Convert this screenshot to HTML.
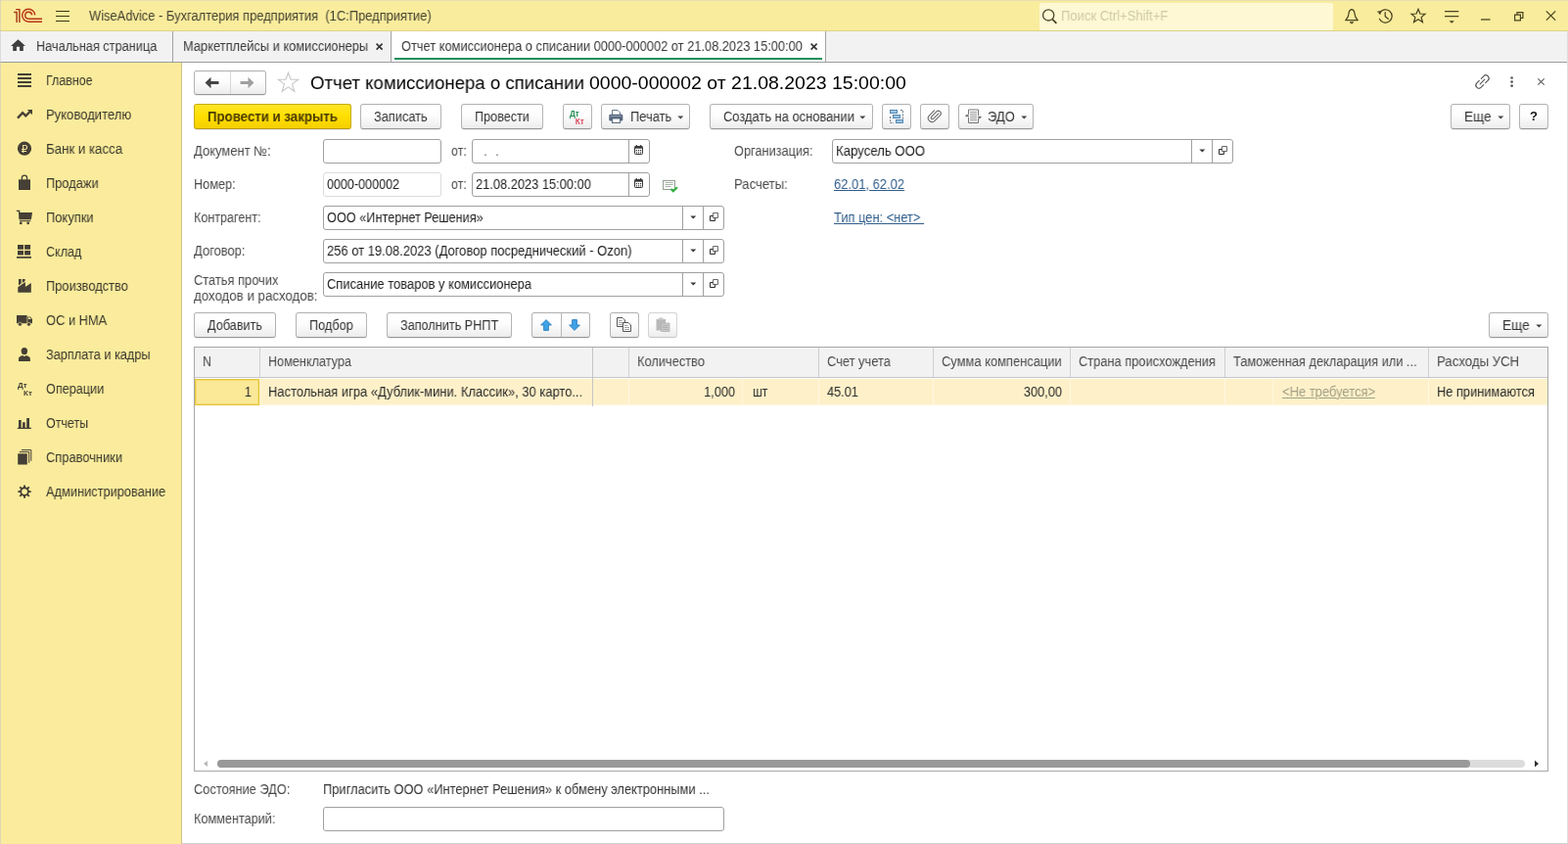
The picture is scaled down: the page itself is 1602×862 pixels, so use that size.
<!DOCTYPE html>
<html lang="ru">
<head>
<meta charset="utf-8">
<title>WiseAdvice - Бухгалтерия предприятия (1С:Предприятие)</title>
<style>
*{box-sizing:border-box;margin:0;padding:0}
html,body{width:1602px;height:862px;overflow:hidden;background:#fff}
body{position:relative;font-family:"Liberation Sans",Arial,sans-serif;font-size:13px;color:#333;line-height:16px;letter-spacing:0}
.abs{position:absolute}
svg{position:absolute;overflow:visible;will-change:transform}
.t{position:absolute;will-change:transform;transform-origin:0 50%;font-size:14px;white-space:nowrap;height:16px;line-height:16px;color:#3a3a3a}
#titlebar{left:0;top:0;width:1602px;height:32px;background:#f9ec9d;border-bottom:1px solid #e0d488;border-top:1px solid #e8deb2}
#tabs{left:0;top:32px;width:1602px;height:32px;background:#f2f2f2;border-bottom:1px solid #9c9c9c}
#side{left:0;top:64px;width:186px;height:798px;background:#faec9c;border-right:1px solid #cfc283}
#search{left:1062px;top:3px;width:300px;height:28px;background:#fef8d4;border-radius:2px}
.tabsep{position:absolute;top:32px;width:1px;height:31px;background:#a2a2a2}
#acttab{left:400px;top:32px;width:443px;height:31px;background:#fff}
#actline{left:403px;top:59px;width:437px;height:2px;background:#1c8f5c}
.btn{position:absolute;height:26px;border:1px solid #b4b4b4;border-top-color:#b0b0b0;border-bottom-color:#989898;border-radius:3px;background:linear-gradient(#fff 0%,#fdfdfd 45%,#ececec 100%);box-shadow:0 1px 0 rgba(0,0,0,.07);font-size:13px;line-height:24px;color:#333;white-space:nowrap}
.btn.y{background:linear-gradient(#ffe526 0%,#ffdf00 50%,#f5cf00 100%);border-color:#c9a900;border-bottom-color:#b89a00}
.btn.dis{border-color:#d4d4d4;border-bottom-color:#c6c6c6;box-shadow:none}
.bt{position:absolute;will-change:transform;transform-origin:0 50%;font-size:14px;white-space:nowrap;line-height:16px;height:16px;color:#333}
.inp{position:absolute;height:25px;border:1px solid #a0a0a0;border-radius:3px;background:#fff}
.inp.ro{border-color:#dcdcdc}
.vd{position:absolute;width:1px;height:23px;background:#a0a0a0}
.it{position:absolute;will-change:transform;transform-origin:0 50%;font-size:14px;white-space:nowrap;line-height:16px;height:16px;color:#1e1e1e}
.lbl{position:absolute;will-change:transform;transform-origin:0 50%;font-size:14px;white-space:nowrap;line-height:16px;height:16px;color:#4a4a4a}
.side-t{position:absolute;will-change:transform;transform-origin:0 50%;font-size:14px;left:47px;white-space:nowrap;line-height:16px;height:16px;color:#3a372c}
.lnk{position:absolute;will-change:transform;transform-origin:0 50%;font-size:14px;white-space:nowrap;line-height:16px;height:16px;color:#2f5d8c;text-decoration:underline}
.th{color:#4a4a4a}
.td{color:#2a2a2a}
</style>
</head>
<body>
<div id="titlebar" class="abs"></div>
<svg style="left:14px;top:9px" width="30" height="15" viewBox="0 0 30 15" fill="none" stroke="#b83616" stroke-width="1.450">
<path d="M0.100 3.500 H3.100 V14 M2.100 0.600 H5.900 V14" stroke="#a8381a"/>
<path d="M21.700 6.400 A6.500 6.500 0 1 0 15.200 13.200 H29"/>
<path d="M18.700 6.400 A3.500 3.500 0 1 0 15.200 10.200 H29"/>
</svg>
<svg style="left:57px;top:11px" width="14" height="11" viewBox="0 0 14 11" shape-rendering="crispEdges"><path d="M0 0h14v1H0zM0 5h14v1H0zM0 10h14v1H0z" fill="#3b3410"/></svg>
<div class="t" id="apptitle" style="transform:translateY(-1px) scaleX(0.9222);left:91px;top:9px;color:#454230">WiseAdvice - Бухгалтерия предприятия&nbsp; (1С:Предприятие)</div>
<div id="search" class="abs"></div>
<svg style="left:1064px;top:8px" width="17" height="17" viewBox="0 0 17 17" fill="none" stroke="#4a4426" stroke-width="1.3"><circle cx="7.2" cy="7.4" r="5.600"/><path d="M11.2 11.6 L15.400 15.800" stroke-width="1.8"/></svg>
<div class="t" id="srch" style="transform:translateY(-1px) scaleX(0.9312);left:1084px;top:9px;color:#cfcaa6">Поиск Ctrl+Shift+F</div>
<svg style="left:1374px;top:8px" width="15" height="17" viewBox="0 0 15 17" fill="none" stroke="#4a4320" stroke-width="1.250" stroke-linejoin="round"><path d="M7 1.600 C4.600 2 4.100 4 4 6 C3.800 9.500 2.500 10.800 0.700 12.700 H13.300 C11.500 10.800 10.200 9.500 10 6 C9.900 4 9.400 2 7 1.600 Z"/><path d="M5 14.600 H9 L7 16.200 Z" fill="#4a4320" stroke-width="0.600"/></svg>
<svg style="left:1407px;top:8px" width="17" height="17" viewBox="0 0 17 17" fill="none" stroke="#4a4320" stroke-width="1.250" stroke-linecap="round"><path d="M2.600 5.300 A6.700 6.700 0 1 1 2.400 11.300"/><path d="M0.600 3.800 L4.300 3.300 L3.100 6.600 Z" fill="#4a4320" stroke-width="0.500" stroke-linejoin="round"/><path d="M8.200 4.600 V8.600 L11.300 11.300"/></svg>
<svg style="left:1441px;top:8px" width="16" height="16" viewBox="0 0 16 16" fill="none" stroke="#4a4320" stroke-width="1.25" stroke-linejoin="miter"><path d="M8 1.3 L9.9 6 L15 6.300 L11.100 9.600 L12.400 14.600 L8 11.800 L3.6 14.600 L4.9 9.600 L1 6.300 L6.100 6 Z"/></svg>
<svg style="left:1476px;top:10px" width="15" height="14" viewBox="0 0 15 14"><path d="M0 1h14.300v1.200H0zM0 6h14.300v1.200H0z" fill="#4a4320"/><path d="M4.500 11.200 H9.900 L7.200 13.700 Z" fill="#4a4320"/></svg>
<svg style="left:1513px;top:19px" width="10" height="2" viewBox="0 0 10 2"><path d="M0 0.300h9.500v1.300H0z" fill="#4a4320"/></svg>
<svg style="left:1547px;top:12px" width="10" height="10" viewBox="0 0 10 10" fill="none" stroke="#4a4320" stroke-width="1.2"><path d="M0.600 3.100 H6.400 V8.900 H0.600 Z"/><path d="M3 3 V0.700 H8.900 V6.400 H6.500"/></svg>
<svg style="left:1579px;top:11px" width="11" height="10" viewBox="0 0 11 10" fill="none" stroke="#4a4320" stroke-width="1.25"><path d="M0.800 0.400 L10.2 9.600 M10.2 0.400 L0.800 9.600"/></svg>
<div id="tabs" class="abs"></div>
<div id="acttab" class="abs"></div>
<div id="actline" class="abs"></div>
<div class="tabsep" style="left:176px"></div>
<div class="tabsep" style="left:399px"></div>
<div class="tabsep" style="left:843px"></div>
<svg style="left:11px;top:40px" width="15" height="13" viewBox="0 0 15 13"><path d="M7.500 0.200 L15 6.900 H12.800 V12 H9.100 V7.800 H5.900 V12 H2.200 V6.900 H0 Z" fill="#3f3f3f"/></svg>
<div class="t" id="tab1" style="transform:translateY(-1px) scaleX(0.9102);left:37px;top:40px">Начальная страница</div>
<div class="t" id="tab2" style="transform:translateY(-1px) scaleX(0.9188);left:187px;top:40px">Маркетплейсы и комиссионеры</div>
<div class="t" id="tab3" style="transform:translateY(-1px) scaleX(0.9168);left:410px;top:40px">Отчет комиссионера о списании 0000-000002 от 21.08.2023 15:00:00</div>
<svg style="left:384px;top:44px" width="7" height="7" viewBox="0 0 7 7" fill="none" stroke="#333" stroke-width="1.600"><path d="M0.600 0.600 L6.600 6.600 M6.600 0.600 L0.600 6.600"/></svg>
<svg style="left:828px;top:44px" width="7" height="7" viewBox="0 0 7 7" fill="none" stroke="#333" stroke-width="1.600"><path d="M0.600 0.600 L6.600 6.600 M6.600 0.600 L0.600 6.600"/></svg>
<div id="side" class="abs"></div>
<div class="side-t" id="s0" style="transform:translateY(-1px) scaleX(0.8879);top:75px">Главное</div>
<div class="side-t" id="s1" style="transform:translateY(-1px) scaleX(0.9325);top:110px">Руководителю</div>
<div class="side-t" id="s2" style="transform:translateY(-1px) scaleX(0.9462);top:145px">Банк и касса</div>
<div class="side-t" id="s3" style="transform:translateY(-1px) scaleX(0.9167);top:180px">Продажи</div>
<div class="side-t" id="s4" style="transform:translateY(-1px) scaleX(0.9227);top:215px">Покупки</div>
<div class="side-t" id="s5" style="transform:translateY(-1px) scaleX(0.8956);top:250px">Склад</div>
<div class="side-t" id="s6" style="transform:translateY(-1px) scaleX(0.9180);top:285px">Производство</div>
<div class="side-t" id="s7" style="transform:translateY(-1px) scaleX(0.9200);top:320px">ОС и НМА</div>
<div class="side-t" id="s8" style="transform:translateY(-1px) scaleX(0.9100);top:355px">Зарплата и кадры</div>
<div class="side-t" id="s9" style="transform:translateY(-1px) scaleX(0.9038);top:390px">Операции</div>
<div class="side-t" id="s10" style="transform:translateY(-1px) scaleX(0.8924);top:425px">Отчеты</div>
<div class="side-t" id="s11" style="transform:translateY(-1px) scaleX(0.9207);top:460px">Справочники</div>
<div class="side-t" id="s12" style="transform:translateY(-1px) scaleX(0.9146);top:495px">Администрирование</div>
<svg style="left:0;top:64px" width="48" height="460" viewBox="0 64 48 460">
<path d="M18 75h14v2H18zM18 79h14v2H18zM18 83h14v2H18zM18 87h14v2H18z" fill="#453f36" shape-rendering="crispEdges"/>
<path d="M18 120.600 L23.100 115.200 L26.300 118.400 L30.400 114.300" fill="none" stroke="#453f36" stroke-width="2.300"/><path d="M27.800 112 H33 V117.200 Z" fill="#453f36"/>
<circle cx="25" cy="151.700" r="7.100" fill="#453f36"/>
<text x="25.100" y="155.900" text-anchor="middle" font-family="DejaVu Sans, Liberation Sans, sans-serif" font-size="10.500" fill="#faec9c">₽</text>
<path d="M19 183.300 H31 V194 H19 Z" fill="#453f36"/><path d="M22.400 185.500 V181.800 A2.600 2.600 0 0 1 27.600 181.800 V185.500" fill="none" stroke="#453f36" stroke-width="1.300"/>
<path d="M16.900 215.300 H19.600 V218" fill="none" stroke="#453f36" stroke-width="1.300"/><path d="M19 216.900 H33 L31.900 224.200 H19.400 Z" fill="#453f36"/><path d="M20 225.700 H31.300" stroke="#453f36" stroke-width="1.100"/><circle cx="21.300" cy="227.900" r="1.350" fill="#453f36"/><circle cx="28.700" cy="227.900" r="1.350" fill="#453f36"/>
<path d="M18 250h6v4.800H18zM25.100 250h6v4.800H25.100zM18 255.900h6v4.700H18zM25.100 255.900h6v4.700H25.100zM17 262h15v1.800H17z" fill="#453f36"/>
<path d="M18.300 298.800 V293.200 L25.900 288 V293 L31.800 289 V298.800 Z" fill="#453f36"/><path d="M19 285 H21.700 V289.600 L19 291.400 Z M22.800 285 H25.600 V287 L22.800 288.900 Z" fill="#453f36"/>
<path d="M17 322 H27.600 V330.300 H17 Z M28.200 323.400 H31 L33 326 V330.300 H28.200 Z" fill="#453f36"/><path d="M28.900 324.200 H30.600 L31.900 326.100 H28.900 Z" fill="#faec9c"/><circle cx="20.400" cy="331.200" r="1.900" fill="#453f36" stroke="#faec9c" stroke-width="0.600"/><circle cx="29.500" cy="331.200" r="1.900" fill="#453f36" stroke="#faec9c" stroke-width="0.600"/>
<ellipse cx="24.900" cy="358.600" rx="3.200" ry="3.600" fill="#453f36"/><path d="M19 368.900 V366.500 C19 364.500 21 363.600 23.200 363.100 L24.900 364.300 L26.600 363.100 C28.800 363.600 30.900 364.500 30.900 366.500 V368.900 Z" fill="#453f36"/>
<text x="18" y="396.300" font-family="Liberation Sans, sans-serif" font-weight="bold" font-size="8" fill="#453f36">Дт</text>
<text x="24" y="403.800" font-family="Liberation Sans, sans-serif" font-weight="bold" font-size="8" fill="#453f36">Кт</text>
<path d="M19 429h2.700v8H19zM23.100 431.200h2.600v5.800H23.100zM27.200 427h2.800v10H27.200zM17.800 436.800h14.100v1.100H17.800z" fill="#453f36"/>
<path d="M18.200 463.300h9.600v11.200H18.200z" fill="#453f36"/><path d="M19.800 461.600 H29.700 V472.800 M21.900 459.600 H31.800 V470.800" fill="none" stroke="#453f36" stroke-width="1"/>
<path d="M28.65 502.10L31.75 502.10M27.60 504.65L29.79 506.84M25.05 505.70L25.05 508.80M22.50 504.65L20.31 506.84M21.45 502.10L18.35 502.10M22.50 499.55L20.31 497.36M25.05 498.50L25.05 495.40M27.60 499.55L29.79 497.36" stroke="#453f36" stroke-width="1.900" fill="none"/><circle cx="25.05" cy="502.1" r="3.850" fill="none" stroke="#453f36" stroke-width="1.800"/>
</svg>
<div class="btn" style="left:198px;top:72px;width:74px;height:25px"></div>
<div class="abs" style="left:235px;top:73px;width:1px;height:23px;background:#d6d6d6"></div>
<svg style="left:209px;top:78px" width="15" height="13" viewBox="0 0 15 13"><path d="M0.500 6.500 L6.500 0.800 V5 H14.500 V8 H6.500 V12.200 Z" fill="#444"/></svg>
<svg style="left:245px;top:78px" width="15" height="13" viewBox="0 0 15 13"><path d="M14.500 6.500 L8.500 0.800 V5 H0.500 V8 H8.500 V12.200 Z" fill="#a0a0a0"/></svg>
<svg style="left:283px;top:73px" width="23" height="22" viewBox="0 0 23 22"><path d="M11.500 1.200 L14 8.300 H21.600 L15.500 12.900 L17.800 20.300 L11.500 15.900 L5.200 20.300 L7.500 12.900 L1.400 8.300 H9 Z" fill="#fff" stroke="#c6c6c6" stroke-width="1.100"/></svg>
<div class="abs" id="ftitle" style="transform:translateY(0px) scaleX(0.9795);will-change:transform;transform-origin:0 50%;left:317px;top:73px;height:24px;line-height:24px;font-size:19px;color:#000;white-space:nowrap">Отчет комиссионера о списании</div>
<div class="abs" id="ftitle2" style="transform:translateY(0px) scaleX(1.0258);will-change:transform;transform-origin:0 50%;left:601.800px;top:73px;height:24px;line-height:24px;font-size:19px;color:#000;white-space:nowrap">0000-000002 от 21.08.2023 15:00:00</div>
<svg style="left:1507px;top:76px" width="15" height="15" viewBox="0 0 15 15" fill="none" stroke="#5a5a5a" stroke-width="1.200" stroke-linecap="round"><path d="M6.300 4.300 L8.800 1.800 A3.100 3.100 0 0 1 13.200 6.200 L10.700 8.700"/><path d="M8.700 10.700 L6.200 13.200 A3.100 3.100 0 0 1 1.800 8.800 L4.300 6.300"/><path d="M5.200 9.800 L9.800 5.200"/></svg>
<svg style="left:1543px;top:78px" width="4" height="12" viewBox="0 0 4 12"><circle cx="1.600" cy="1.500" r="1.350" fill="#5a5a5a"/><circle cx="1.600" cy="5.600" r="1.350" fill="#5a5a5a"/><circle cx="1.600" cy="9.700" r="1.350" fill="#5a5a5a"/></svg>
<svg style="left:1571px;top:80px" width="7" height="7" viewBox="0 0 7 7" fill="none" stroke="#5a5a5a" stroke-width="1.100"><path d="M0.300 0.300 L6.700 6.700 M6.700 0.300 L0.300 6.700"/></svg>
<div class="btn y" style="left:198px;top:106px;width:161px;height:26px"></div>
<div class="bt" id="b1" style="transform:translateY(-1px) scaleX(0.9467);left:212px;top:112px;font-weight:bold;color:#4a3b00">Провести и закрыть</div>
<div class="btn " style="left:368px;top:106px;width:83px;height:26px"></div>
<div class="bt" id="b2" style="transform:translateY(-1px) scaleX(0.9143);left:382px;top:112px;">Записать</div>
<div class="btn " style="left:471px;top:106px;width:84px;height:26px"></div>
<div class="bt" id="b3" style="transform:translateY(-1px) scaleX(0.9025);left:485px;top:112px;">Провести</div>
<div class="btn " style="left:575px;top:106px;width:30px;height:26px"></div>
<svg style="left:581px;top:110px" width="20" height="18" viewBox="0 0 20 18"><text x="1" y="8.500" font-family="Liberation Sans, sans-serif" font-weight="bold" font-size="8.200" fill="#1f8b4d">Дт</text><text x="6.800" y="16.500" font-family="Liberation Sans, sans-serif" font-weight="bold" font-size="8.200" fill="#dc4a5c">Кт</text></svg>
<div class="btn " style="left:614px;top:106px;width:91px;height:26px"></div>
<div class="bt" id="b4" style="transform:translateY(-1px) scaleX(0.9199);left:644px;top:112px;">Печать</div>
<svg style="left:692px;top:118px" width="7" height="4" viewBox="0 0 7 4"><path d="M0.300 0.500 H6.300 L3.300 3.500 Z" fill="#444"/></svg>
<svg style="left:622px;top:112px" width="15" height="14" viewBox="0 0 15 14"><path d="M3.500 0.500 H9 L11.500 3 V6 H3.500 Z" fill="#fff" stroke="#6a7a8c" stroke-width="1"/><rect x="0.300" y="4.800" width="14" height="6.700" rx="1.300" fill="#55657c"/><rect x="1.500" y="6" width="11.600" height="1.200" fill="#8b98ab"/><rect x="3.500" y="9" width="8" height="4.500" fill="#fff" stroke="#5a6a7c" stroke-width="1"/></svg>
<div class="btn " style="left:725px;top:106px;width:167px;height:26px"></div>
<div class="bt" id="b5" style="transform:translateY(-1px) scaleX(0.9219);left:739px;top:112px;">Создать на основании</div>
<svg style="left:878px;top:118px" width="7" height="4" viewBox="0 0 7 4"><path d="M0.300 0.500 H6.300 L3.300 3.500 Z" fill="#444"/></svg>
<div class="btn " style="left:901px;top:106px;width:30px;height:26px"></div>
<svg style="left:909px;top:112px" width="15" height="14" viewBox="0 0 15 14"><path d="M11 0.500 H13.500 V10 M0.500 7 V13.500 H4" fill="none" stroke="#5a6a7a" stroke-width="0.900" stroke-dasharray="2 1.200"/><rect x="0.500" y="0.500" width="7" height="3" fill="#9cc7e8" stroke="#4a7faa" stroke-width="0.900"/><rect x="3.500" y="5.500" width="7" height="3" fill="#9cc7e8" stroke="#4a7faa" stroke-width="0.900"/><rect x="6.500" y="10.500" width="7" height="3" fill="#9cc7e8" stroke="#4a7faa" stroke-width="0.900"/></svg>
<div class="btn " style="left:940px;top:106px;width:30px;height:26px"></div>
<svg style="left:948px;top:111px" width="14" height="15" viewBox="0 0 14 15" fill="none" stroke="#6a6a6a" stroke-width="1.100" stroke-linecap="round"><path d="M10.800 5.200 L5.600 10.400 A1.500 1.500 0 0 1 3.500 8.300 L8.900 2.900 A2.700 2.700 0 0 1 12.700 6.700 L6.800 12.600 A3.900 3.900 0 0 1 1.300 7.100 L6.500 1.900"/></svg>
<div class="btn " style="left:979px;top:106px;width:77px;height:26px"></div>
<div class="bt" id="b6" style="transform:translateY(-1px) scaleX(0.9310);left:1009px;top:112px;">ЭДО</div>
<svg style="left:1043px;top:118px" width="7" height="4" viewBox="0 0 7 4"><path d="M0.300 0.500 H6.300 L3.300 3.500 Z" fill="#444"/></svg>
<svg style="left:986px;top:111px" width="17" height="16" viewBox="0 0 17 16" fill="none" stroke="#777" stroke-width="1"><path d="M3.500 1 H13.500 V7 M13.500 10 V14.500 H3.500 V9 M3.500 6 V1"/><path d="M5 3.500 H12 M5 5.500 H12 M5 7.500 H12 M5 9.500 H12 M5 11.500 H12" stroke="#999" stroke-width="1"/><path d="M0.500 7.500 H4 M13 8.500 H16.500" stroke-width="1.300"/><path d="M2 5.500 L3.800 7.500 H0.200 Z M14.800 10.500 L13 8.500 H16.600 Z" fill="#777" stroke="none"/></svg>
<div class="btn " style="left:1482px;top:106px;width:61px;height:26px"></div>
<div class="bt" id="b7" style="transform:translateY(-1px) scaleX(0.9684);left:1496px;top:112px;">Еще</div>
<svg style="left:1530px;top:118px" width="7" height="4" viewBox="0 0 7 4"><path d="M0.300 0.500 H6.300 L3.300 3.500 Z" fill="#444"/></svg>
<div class="btn " style="left:1552px;top:106px;width:30px;height:26px"></div>
<div class="bt" id="b8" style="transform:translateY(-1px) scaleX(0.9933);left:1563px;top:112px;color:#111;font-weight:bold;font-size:13px">?</div>
<div class="lbl " id="l1" style="transform:translateY(-1px) scaleX(0.9269);left:198px;top:147px;">Документ №:</div>
<div class="inp " style="left:330px;top:142px;width:121px"></div>
<div class="lbl " id="l2" style="transform:translateY(-1px) scaleX(0.8830);left:461px;top:147px;">от:</div>
<div class="inp " style="left:482px;top:142px;width:182px"></div>
<div class="vd" style="left:642px;top:143px"></div>
<div class="it" id="i1" style="transform:translateY(-1px) scaleX(1.0238);left:486px;top:147px;color:#777">&nbsp; .&nbsp; .</div>
<svg style="left:648px;top:148px" width="9" height="10" viewBox="0 0 9 10"><rect x="0.500" y="1.500" width="8" height="8" rx="0.800" fill="#fff" stroke="#3a3a3a" stroke-width="1"/><rect x="0.500" y="1.500" width="8" height="2.200" fill="#3a3a3a"/><path d="M2.300 0 V2 M6.700 0 V2" stroke="#3a3a3a" stroke-width="1.200"/><path d="M1.800 5h1.200v1.200H1.800zM3.900 5h1.200v1.200H3.900zM6 5h1.200v1.200H6zM1.800 7.200h1.200v1.200H1.800zM3.900 7.200h1.200v1.200H3.900zM6 7.200h1.200v1.200H6z" fill="#3a3a3a"/></svg>
<div class="lbl " id="l3" style="transform:translateY(-1px) scaleX(0.9114);left:750px;top:147px;">Организация:</div>
<div class="inp " style="left:850px;top:142px;width:410px"></div>
<div class="vd" style="left:1217px;top:143px"></div>
<div class="vd" style="left:1238px;top:143px"></div>
<div class="it" id="i2" style="transform:translateY(-1px) scaleX(0.9415);left:854px;top:147px;">Карусель ООО</div>
<svg style="left:1225px;top:152px" width="7" height="4" viewBox="0 0 7 4"><path d="M0.300 0.500 H6.300 L3.300 3.500 Z" fill="#3a3a3a"/></svg>
<svg style="left:1245px;top:149px" width="9" height="9" viewBox="0 0 9 9" fill="none" stroke-width="1"><path d="M3.500 0.500 H8.500 V5.500 H3.500 Z" stroke="#6a6a6a"/><path d="M3.300 3.500 H0.500 V8.500 H5.500 V5.700" stroke="#2e2e2e"/></svg>
<div class="lbl " id="l4" style="transform:translateY(-1px) scaleX(0.9088);left:198px;top:181px;">Номер:</div>
<div class="inp ro" style="left:330px;top:176px;width:121px"></div>
<div class="it" id="i3" style="transform:translateY(-1px) scaleX(0.8966);left:334px;top:181px;">0000-000002</div>
<div class="lbl " id="l5" style="transform:translateY(-1px) scaleX(0.8830);left:461px;top:181px;">от:</div>
<div class="inp " style="left:482px;top:176px;width:182px"></div>
<div class="vd" style="left:642px;top:177px"></div>
<div class="it" id="i4" style="transform:translateY(-1px) scaleX(0.9170);left:486px;top:181px;">21.08.2023 15:00:00</div>
<svg style="left:648px;top:182px" width="9" height="10" viewBox="0 0 9 10"><rect x="0.500" y="1.500" width="8" height="8" rx="0.800" fill="#fff" stroke="#3a3a3a" stroke-width="1"/><rect x="0.500" y="1.500" width="8" height="2.200" fill="#3a3a3a"/><path d="M2.300 0 V2 M6.700 0 V2" stroke="#3a3a3a" stroke-width="1.200"/><path d="M1.800 5h1.200v1.200H1.800zM3.900 5h1.200v1.200H3.900zM6 5h1.200v1.200H6zM1.800 7.200h1.200v1.200H1.800zM3.900 7.200h1.200v1.200H3.900zM6 7.200h1.200v1.200H6z" fill="#3a3a3a"/></svg>
<svg style="left:677px;top:184px" width="16" height="13" viewBox="0 0 16 13"><rect x="0.500" y="0.500" width="12" height="9" fill="#fbfdfb" stroke="#93a093" stroke-width="1"/><path d="M2.500 2.500 H10.500 M2.500 4.500 H10.500 M2.500 6.500 H8.500" stroke="#aab4aa" stroke-width="1"/><path d="M8.500 9 L10.800 11.300 L15 7.200" fill="none" stroke="#2fae3f" stroke-width="2"/></svg>
<div class="lbl " id="l6" style="transform:translateY(-1px) scaleX(0.9370);left:750px;top:181px;">Расчеты:</div>
<div class="lnk" id="k1" style="transform:translateY(-1px) scaleX(0.9260);left:852px;top:181px">62.01, 62.02</div>
<div class="lbl " id="l7" style="transform:translateY(-1px) scaleX(0.8980);left:198px;top:215px;">Контрагент:</div>
<div class="inp " style="left:330px;top:210px;width:410px"></div>
<div class="vd" style="left:697px;top:211px"></div>
<div class="vd" style="left:718px;top:211px"></div>
<div class="it" id="i5" style="transform:translateY(-1px) scaleX(0.9086);left:334px;top:215px;">ООО «Интернет Решения»</div>
<svg style="left:705px;top:220px" width="7" height="4" viewBox="0 0 7 4"><path d="M0.300 0.500 H6.300 L3.300 3.500 Z" fill="#3a3a3a"/></svg>
<svg style="left:725px;top:217px" width="9" height="9" viewBox="0 0 9 9" fill="none" stroke-width="1"><path d="M3.500 0.500 H8.500 V5.500 H3.500 Z" stroke="#6a6a6a"/><path d="M3.300 3.500 H0.500 V8.500 H5.500 V5.700" stroke="#2e2e2e"/></svg>
<div class="lnk" id="k2" style="transform:translateY(-1px) scaleX(0.9191);left:852px;top:215px">Тип цен: &lt;нет&gt;&nbsp;</div>
<div class="lbl " id="l8" style="transform:translateY(-1px) scaleX(0.9249);left:198px;top:249px;">Договор:</div>
<div class="inp " style="left:330px;top:244px;width:410px"></div>
<div class="vd" style="left:697px;top:245px"></div>
<div class="vd" style="left:718px;top:245px"></div>
<div class="it" id="i6" style="transform:translateY(-1px) scaleX(0.9266);left:334px;top:249px;">256 от 19.08.2023 (Договор посреднический - Ozon)</div>
<svg style="left:705px;top:254px" width="7" height="4" viewBox="0 0 7 4"><path d="M0.300 0.500 H6.300 L3.300 3.500 Z" fill="#3a3a3a"/></svg>
<svg style="left:725px;top:251px" width="9" height="9" viewBox="0 0 9 9" fill="none" stroke-width="1"><path d="M3.500 0.500 H8.500 V5.500 H3.500 Z" stroke="#6a6a6a"/><path d="M3.300 3.500 H0.500 V8.500 H5.500 V5.700" stroke="#2e2e2e"/></svg>
<div class="lbl " id="l9" style="transform:translateY(-1px) scaleX(0.9193);left:198px;top:279px;">Статья прочих</div>
<div class="lbl " id="l10" style="transform:translateY(-1px) scaleX(0.9483);left:198px;top:295px;">доходов и расходов:</div>
<div class="inp " style="left:330px;top:278px;width:410px"></div>
<div class="vd" style="left:697px;top:279px"></div>
<div class="vd" style="left:718px;top:279px"></div>
<div class="it" id="i7" style="transform:translateY(-1px) scaleX(0.9226);left:334px;top:283px;">Списание товаров у комиссионера</div>
<svg style="left:705px;top:288px" width="7" height="4" viewBox="0 0 7 4"><path d="M0.300 0.500 H6.300 L3.300 3.500 Z" fill="#3a3a3a"/></svg>
<svg style="left:725px;top:285px" width="9" height="9" viewBox="0 0 9 9" fill="none" stroke-width="1"><path d="M3.500 0.500 H8.500 V5.500 H3.500 Z" stroke="#6a6a6a"/><path d="M3.300 3.500 H0.500 V8.500 H5.500 V5.700" stroke="#2e2e2e"/></svg>
<div class="btn " style="left:198px;top:319px;width:84px;height:26px"></div>
<div class="bt" id="c1" style="transform:translateY(-1px) scaleX(0.9051);left:212px;top:325px;">Добавить</div>
<div class="btn " style="left:302px;top:319px;width:73px;height:26px"></div>
<div class="bt" id="c2" style="transform:translateY(-1px) scaleX(0.9085);left:316px;top:325px;">Подбор</div>
<div class="btn " style="left:395px;top:319px;width:128px;height:26px"></div>
<div class="bt" id="c3" style="transform:translateY(-1px) scaleX(0.9053);left:409px;top:325px;">Заполнить РНПТ</div>
<div class="btn " style="left:543px;top:319px;width:60px;height:26px"></div>
<div class="abs" style="left:573px;top:320px;width:1px;height:24px;background:#b8b8b8"></div>
<svg style="left:552px;top:326px" width="12" height="12" viewBox="0 0 12 12"><path d="M6 0.600 L11.400 6 H8.400 V11.400 H3.600 V6 H0.600 Z" fill="#3fa2e6" stroke="#2b7fc0" stroke-width="0.900" stroke-linejoin="round"/></svg>
<svg style="left:581px;top:326px" width="12" height="12" viewBox="0 0 12 12"><path d="M6 11.400 L11.400 6 H8.400 V0.600 H3.600 V6 H0.600 Z" fill="#3fa2e6" stroke="#2b7fc0" stroke-width="0.900" stroke-linejoin="round"/></svg>
<div class="btn " style="left:623px;top:319px;width:30px;height:26px"></div>
<svg style="left:630px;top:324px" width="16" height="15" viewBox="0 0 16 15" fill="#fff" stroke="#555" stroke-width="1"><path d="M0.500 0.500 H6 L8.500 3 V9.500 H0.500 Z"/><path d="M2 3.500 H5.500 M2 5.500 H7 M2 7.500 H7" stroke-width="0.800" stroke="#888"/><path d="M6.500 5.500 H12 L14.500 8 V14.500 H6.500 Z"/><path d="M8 8.500 H11.500 M8 10.500 H13 M8 12.500 H13" stroke-width="0.800" stroke="#888"/></svg>
<div class="btn dis" style="left:662px;top:319px;width:30px;height:26px"></div>
<svg style="left:670px;top:324px" width="15" height="15" viewBox="0 0 15 15"><path d="M0.500 2 H10 V13.500 H0.500 Z" fill="#b9b9b9"/><path d="M3 0.500 H7.500 V3 H3 Z" fill="#c8c8c8"/><path d="M5.500 6 H14 V14.500 H5.500 Z" fill="#c9c9c9" stroke="#b0b0b0" stroke-width="0.800"/><path d="M7 8.500 H12.500 M7 10.500 H12.500 M7 12.500 H12.500" stroke="#aaa" stroke-width="0.800"/></svg>
<div class="btn " style="left:1521px;top:319px;width:61px;height:26px"></div>
<div class="bt" id="c4" style="transform:translateY(-1px) scaleX(0.9719);left:1535px;top:325px;">Еще</div>
<svg style="left:1569px;top:331px" width="7" height="4" viewBox="0 0 7 4"><path d="M0.300 0.500 H6.300 L3.300 3.500 Z" fill="#444"/></svg>
<div class="abs" id="tbl" style="left:198px;top:354px;width:1384px;height:434px;border:1px solid #a8a8a8;background:#fff"></div>
<div class="abs" id="thead" style="left:199px;top:355px;width:1382px;height:31px;background:#f2f2f2;border-bottom:1px solid #c6c6c6"></div>
<div class="abs" id="trow" style="left:199px;top:387px;width:1382px;height:26px;background:#fef1c9;border-bottom:1px solid #fdf6dc;box-sizing:content-box"></div>
<div class="abs" id="selcell" style="left:199px;top:387px;width:66px;height:27px;background:#fbe998;border:1px solid #e6c53c;box-shadow:inset 0 0 0 1px #f6dc70"></div>
<div class="abs" style="left:265px;top:355px;width:1px;height:30px;background:#d0d0d0"></div>
<div class="abs" style="left:605px;top:355px;width:1px;height:30px;background:#d0d0d0"></div>
<div class="abs" style="left:605px;top:355px;width:1px;height:60px;background:#c4c4c4"></div>
<div class="abs" style="left:642px;top:355px;width:1px;height:30px;background:#d0d0d0"></div>
<div class="abs" style="left:642px;top:387px;width:1px;height:26px;background:#fff8e2"></div>
<div class="abs" style="left:836px;top:355px;width:1px;height:30px;background:#d0d0d0"></div>
<div class="abs" style="left:836px;top:387px;width:1px;height:26px;background:#fff8e2"></div>
<div class="abs" style="left:953px;top:355px;width:1px;height:30px;background:#d0d0d0"></div>
<div class="abs" style="left:953px;top:387px;width:1px;height:26px;background:#fff8e2"></div>
<div class="abs" style="left:1093px;top:355px;width:1px;height:30px;background:#d0d0d0"></div>
<div class="abs" style="left:1093px;top:387px;width:1px;height:26px;background:#fff8e2"></div>
<div class="abs" style="left:1251px;top:355px;width:1px;height:30px;background:#d0d0d0"></div>
<div class="abs" style="left:1251px;top:387px;width:1px;height:26px;background:#fff8e2"></div>
<div class="abs" style="left:1459px;top:355px;width:1px;height:30px;background:#d0d0d0"></div>
<div class="abs" style="left:1459px;top:387px;width:1px;height:26px;background:#fff8e2"></div>
<div class="abs" style="left:758px;top:387px;width:1px;height:26px;background:#fff6da"></div>
<div class="abs" style="left:1300px;top:387px;width:1px;height:26px;background:#fff6da"></div>
<div class="lbl th" id="h0" style="transform:translateY(-1px) scaleX(0.8889);left:207px;top:362px;">N</div>
<div class="lbl th" id="h1" style="transform:translateY(-1px) scaleX(0.9036);left:274px;top:362px;">Номенклатура</div>
<div class="lbl th" id="h2" style="transform:translateY(-1px) scaleX(0.9164);left:651px;top:362px;">Количество</div>
<div class="lbl th" id="h3" style="transform:translateY(-1px) scaleX(0.9202);left:845px;top:362px;">Счет учета</div>
<div class="lbl th" id="h4" style="transform:translateY(-1px) scaleX(0.9217);left:962px;top:362px;">Сумма компенсации</div>
<div class="lbl th" id="h5" style="transform:translateY(-1px) scaleX(0.9179);left:1102px;top:362px;">Страна происхождения</div>
<div class="lbl th" id="h6" style="transform:translateY(-1px) scaleX(0.9139);left:1260px;top:362px;">Таможенная декларация или ...</div>
<div class="lbl th" id="h7" style="transform:translateY(-1px) scaleX(0.9437);left:1468px;top:362px;">Расходы УСН</div>
<div class="lbl td" id="d0" style="transform:translateY(-1px) scaleX(0.9200);left:199px;top:393px;width:58px;text-align:right;transform-origin:100% 50%">1</div>
<div class="lbl td" id="d1" style="transform:translateY(-1px) scaleX(0.9237);left:274px;top:393px;">Настольная игра «Дублик-мини. Классик», 30 карто...</div>
<div class="lbl td" id="d2" style="transform:translateY(-1px) scaleX(0.9102);left:651px;top:393px;width:100px;text-align:right;transform-origin:100% 50%">1,000</div>
<div class="lbl td" id="d3" style="transform:translateY(-1px) scaleX(0.8665);left:769px;top:393px;">шт</div>
<div class="lbl td" id="d4" style="transform:translateY(-1px) scaleX(0.9102);left:845px;top:393px;">45.01</div>
<div class="lbl td" id="d5" style="transform:translateY(-1px) scaleX(0.9153);left:985px;top:393px;width:100px;text-align:right;transform-origin:100% 50%">300,00</div>
<div class="lbl " id="d6" style="transform:translateY(-1px) scaleX(0.9261);left:1310px;top:393px;color:#a29f86;text-decoration:underline">&lt;Не требуется&gt;</div>
<div class="lbl td" id="d7" style="transform:translateY(-1px) scaleX(0.9159);left:1468px;top:393px;">Не принимаются</div>
<div class="abs" style="left:222px;top:776px;width:1336px;height:8px;border-radius:4px;background:#dcdcdc"></div>
<div class="abs" style="left:222px;top:776px;width:1280px;height:8px;border-radius:4px;background:#999"></div>
<svg style="left:207px;top:776px" width="6" height="8" viewBox="0 0 6 8"><path d="M5 1 L1 4 L5 7 Z" fill="#b8b8b8"/></svg>
<svg style="left:1567px;top:776px" width="6" height="8" viewBox="0 0 6 8"><path d="M1 0.500 L5 4 L1 7.500 Z" fill="#333"/></svg>
<div class="lbl " id="f1" style="transform:translateY(-1px) scaleX(0.9144);left:198px;top:799px;">Состояние ЭДО:</div>
<div class="lbl " id="f2" style="transform:translateY(-1px) scaleX(0.9192);left:330px;top:799px;color:#333">Пригласить ООО «Интернет Решения» к обмену электронными ...</div>
<div class="lbl " id="f3" style="transform:translateY(-1px) scaleX(0.9058);left:198px;top:829px;">Комментарий:</div>
<div class="inp " style="left:330px;top:824px;width:410px"></div>
<div class="abs" style="left:0;top:0;width:1px;height:862px;background:rgba(200,200,200,.55)"></div>
<div class="abs" style="left:1601px;top:32px;width:1px;height:830px;background:#dedede"></div>
<div class="abs" style="left:186px;top:861px;width:1416px;height:1px;background:#d2d2d2"></div>
</body>
</html>
